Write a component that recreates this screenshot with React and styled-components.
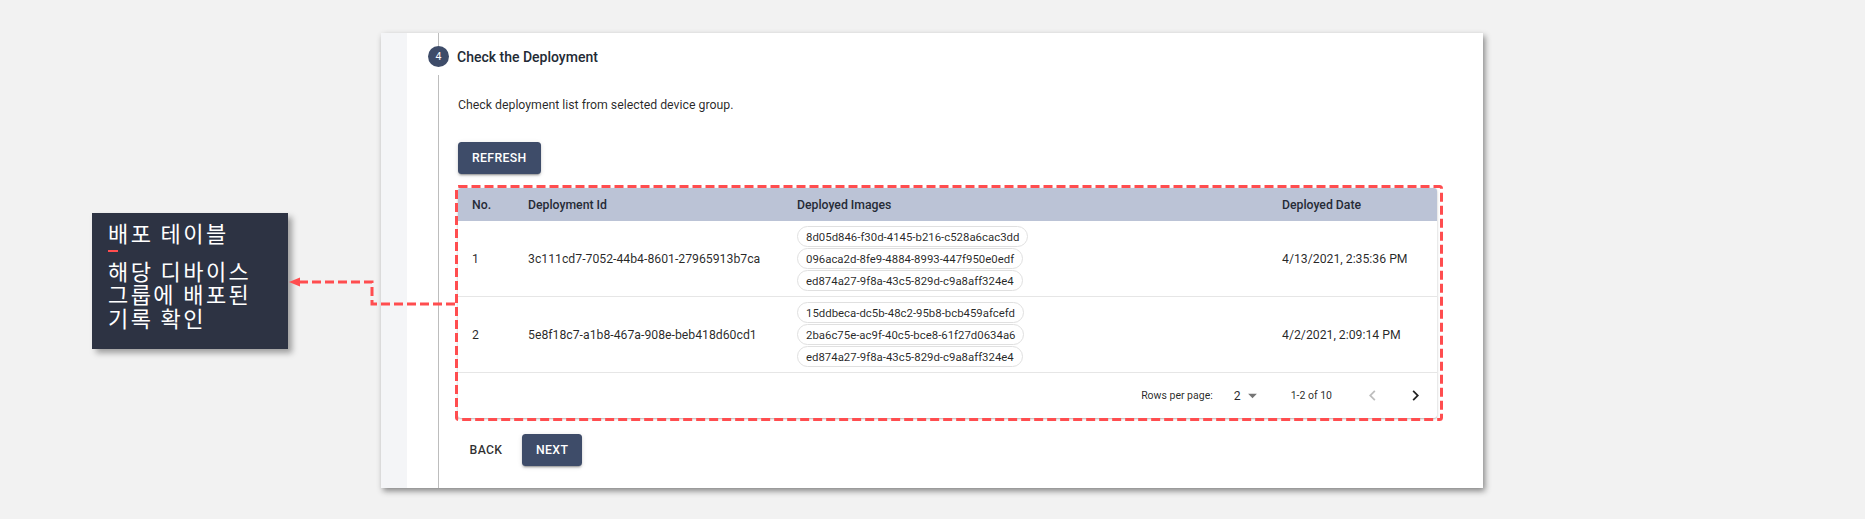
import React from 'react';
import styled, { createGlobalStyle } from 'styled-components';

const GlobalStyle = createGlobalStyle`
  html, body {
    margin: 0;
    padding: 0;
  }
  body {
    background: #f2f2f2;
    font-family: Roboto, 'Noto Sans', Arial, sans-serif;
  }
`;

const ACCENT = '#3e4c69';
const MARK = '#ff4d4f';

const DEPLOYMENTS = [
  {
    id: '3c111cd7-7052-44b4-8601-27965913b7ca',
    images: [
      '8d05d846-f30d-4145-b216-c528a6cac3dd',
      '096aca2d-8fe9-4884-8993-447f950e0edf',
      'ed874a27-9f8a-43c5-829d-c9a8aff324e4',
    ],
    date: '4/13/2021, 2:35:36 PM',
  },
  {
    id: '5e8f18c7-a1b8-467a-908e-beb418d60cd1',
    images: [
      '15ddbeca-dc5b-48c2-95b8-bcb459afcefd',
      '2ba6c75e-ac9f-40c5-bce8-61f27d0634a6',
      'ed874a27-9f8a-43c5-829d-c9a8aff324e4',
    ],
    date: '4/2/2021, 2:09:14 PM',
  },
];

const Page = styled.div`
  position: relative;
  display: flex;
  align-items: flex-start;
  width: 1865px;
  height: 519px;
  padding: 33px 0 0 92px;
  box-sizing: border-box;
  overflow: hidden;
`;

const Note = styled.div`
  width: 196px;
  height: 136px;
  box-sizing: border-box;
  margin: 180px 93px 0 0;
  padding: 8px 16px;
  background: #2d3343;
  box-shadow: 4px 4px 6px rgba(0, 0, 0, 0.35);
  color: #fff;
  font-family: 'Noto Sans CJK KR', 'Noto Sans', sans-serif;
  font-size: 22px;
  letter-spacing: 2.4px;
  line-height: 23.5px;
  white-space: nowrap;
`;

const NoteTitle = styled.div`
  margin-bottom: 14px;
`;

const Caret = styled.span`
  position: relative;
  &::after {
    content: '';
    position: absolute;
    left: 0;
    bottom: -4px;
    width: 10px;
    height: 2px;
    background: ${MARK};
  }
`;

const Card = styled.div`
  display: flex;
  width: 1102px;
  height: 455px;
  background: #fff;
  box-shadow: 2px 3px 6px rgba(0, 0, 0, 0.45);
`;

const Strip = styled.div`
  width: 26px;
  background: #f4f5f7;
`;

const Main = styled.div`
  flex: 1;
  display: flex;
  flex-direction: column;
  padding-left: 21px;
`;

const TopLine = styled.div`
  height: 13px;
  margin-left: 10px;
  border-left: 1px solid #bdbdbd;
`;

const StepHeader = styled.div`
  display: flex;
  align-items: center;
  gap: 8px;
  height: 21px;
`;

const StepIcon = styled.div`
  display: flex;
  align-items: center;
  justify-content: center;
  width: 21px;
  height: 21px;
  border-radius: 50%;
  background: ${ACCENT};
  color: #fff;
  font-size: 10.5px;
`;

const StepTitle = styled.div`
  font-size: 14px;
  font-weight: 500;
  color: #232a35;
`;

const StepBody = styled.div`
  flex: 1;
  display: flex;
  flex-direction: column;
  align-items: flex-start;
  margin: 8px 0 0 10px;
  padding: 21px 46px 0 19px;
  border-left: 1px solid #bdbdbd;
`;

const Description = styled.p`
  margin: 0;
  font-size: 12.3px;
  line-height: 18px;
  color: rgba(0, 0, 0, 0.85);
`;

const Button = styled.button`
  height: 32px;
  min-width: 56px;
  padding: 0 ${(p) => (p.$text ? '7px' : '14px')};
  border: none;
  border-radius: 3.5px;
  background: ${(p) => (p.$text ? 'transparent' : ACCENT)};
  color: ${(p) => (p.$text ? 'rgba(0, 0, 0, 0.82)' : '#fff')};
  font-family: Roboto, sans-serif;
  font-size: 12.25px;
  font-weight: 500;
  letter-spacing: 0.35px;
  text-transform: uppercase;
  box-shadow: ${(p) => (p.$text
    ? 'none'
    : '0 3px 1px -2px rgba(0,0,0,.2), 0 2px 2px 0 rgba(0,0,0,.14), 0 1px 5px 0 rgba(0,0,0,.12)')};
`;

const RefreshButton = styled(Button)`
  margin-top: 28px;
`;

const TableZone = styled.div`
  position: relative;
  align-self: stretch;
  margin: 11px -6px 0 -3px;
  padding: 3px 6px 3px 3px;
`;

const Frame = styled.svg`
  position: absolute;
  inset: 0;
  width: 100%;
  height: 100%;
  overflow: visible;
  pointer-events: none;
`;

const FrameRect = styled.rect`
  x: 1.5px;
  y: 1.5px;
  width: calc(100% - 3px);
  height: calc(100% - 3px);
  rx: 2px;
  fill: none;
  stroke: ${MARK};
  stroke-width: 3;
  stroke-dasharray: 9 4;
`;

const Paper = styled.div`
  background: #fff;
  border-radius: 3px;
  overflow: hidden;
  box-shadow: 0 1px 3px rgba(0, 0, 0, 0.2), 0 1px 1px rgba(0, 0, 0, 0.12);
`;

const Table = styled.table`
  width: 100%;
  border-collapse: collapse;
  table-layout: fixed;
  font-size: 12.25px;
  color: rgba(0, 0, 0, 0.85);
`;

const HeadCell = styled.th`
  height: 33px;
  padding: 0 14px;
  text-align: left;
  font-weight: 500;
  color: #262b36;
  background: #bbc3d6;
`;

const Cell = styled.td`
  height: 65px;
  padding: 5px 14px;
  border-bottom: 1px solid #e6e6e6;
`;

const ChipStack = styled.div`
  display: flex;
  flex-direction: column;
  align-items: flex-start;
  gap: 1px;
`;

const Chip = styled.span`
  display: inline-flex;
  align-items: center;
  height: 21px;
  box-sizing: border-box;
  padding: 0 8px;
  border: 1px solid #e0e0e0;
  border-radius: 11px;
  font-size: 11.4px;
  color: rgba(0, 0, 0, 0.85);
`;

const PaginationBar = styled.div`
  display: flex;
  align-items: center;
  justify-content: flex-end;
  height: 45px;
  padding-right: 11px;
  color: rgba(0, 0, 0, 0.85);
`;

const PageLabel = styled.span`
  font-size: 10.5px;
  margin-right: ${(p) => p.$gap}px;
`;

const PageSelect = styled.div`
  display: flex;
  align-items: center;
  margin-right: 28px;
  font-size: 12.25px;
`;

const PageIcon = styled.svg`
  width: 21px;
  height: 21px;
  fill: ${(p) => (p.$muted ? 'rgba(0, 0, 0, 0.26)' : 'rgba(0, 0, 0, 0.87)')};
  margin-left: ${(p) => p.$offset || 0}px;
`;

const Actions = styled.div`
  display: flex;
  gap: 8px;
  margin-top: 13px;
`;

const Pointer = styled.svg`
  position: absolute;
  left: 284px;
  top: 274px;
  width: 180px;
  height: 36px;
  overflow: visible;
`;

function DeploymentTable() {
  return (
    <TableZone>
      <Paper>
        <Table>
          <colgroup>
            <col width="56" />
            <col width="269" />
            <col width="485" />
            <col width="169" />
          </colgroup>
          <thead>
            <tr>
              <HeadCell>No.</HeadCell>
              <HeadCell>Deployment Id</HeadCell>
              <HeadCell>Deployed Images</HeadCell>
              <HeadCell>Deployed Date</HeadCell>
            </tr>
          </thead>
          <tbody>
            {DEPLOYMENTS.map((row, i) => (
              <tr key={row.id}>
                <Cell>{i + 1}</Cell>
                <Cell>{row.id}</Cell>
                <Cell>
                  <ChipStack>
                    {row.images.map((img) => <Chip key={img}>{img}</Chip>)}
                  </ChipStack>
                </Cell>
                <Cell>{row.date}</Cell>
              </tr>
            ))}
          </tbody>
        </Table>
        <PaginationBar>
          <PageLabel $gap={21}>Rows per page:</PageLabel>
          <PageSelect>
            2
            <PageIcon viewBox="0 0 24 24" $muted $offset={1}>
              <path d="M7 10l5 5 5-5z" fill="rgba(0,0,0,0.54)" />
            </PageIcon>
          </PageSelect>
          <PageLabel $gap={30}>1-2 of 10</PageLabel>
          <PageIcon viewBox="0 0 24 24" $muted>
            <path d="M15.41 16.59L10.83 12l4.58-4.59L14 6l-6 6 6 6 1.41-1.41z" />
          </PageIcon>
          <PageIcon viewBox="0 0 24 24" $offset={22}>
            <path d="M8.59 16.59L13.17 12 8.59 7.41 10 6l6 6-6 6-1.41-1.41z" />
          </PageIcon>
        </PaginationBar>
      </Paper>
      <Frame>
        <FrameRect />
      </Frame>
    </TableZone>
  );
}

export default function App() {
  return (
    <>
      <GlobalStyle />
      <Page>
        <Note>
          <NoteTitle>
            <Caret>배</Caret>
            포 테이블
          </NoteTitle>
          <div>해당 디바이스</div>
          <div>그룹에 배포된</div>
          <div>기록 확인</div>
        </Note>
        <Card>
          <Strip />
          <Main>
            <TopLine />
            <StepHeader>
              <StepIcon>4</StepIcon>
              <StepTitle>Check the Deployment</StepTitle>
            </StepHeader>
            <StepBody>
              <Description>Check deployment list from selected device group.</Description>
              <RefreshButton>Refresh</RefreshButton>
              <DeploymentTable />
              <Actions>
                <Button $text>Back</Button>
                <Button>Next</Button>
              </Actions>
            </StepBody>
          </Main>
        </Card>
        <Pointer viewBox="0 0 180 36">
          <polyline
            points="15,8 88,8 88,30 172,30"
            fill="none"
            stroke={MARK}
            strokeWidth="3"
            strokeDasharray="9 4"
          />
          <polygon points="5,8 16,3.5 16,12.5" fill={MARK} />
        </Pointer>
      </Page>
    </>
  );
}
